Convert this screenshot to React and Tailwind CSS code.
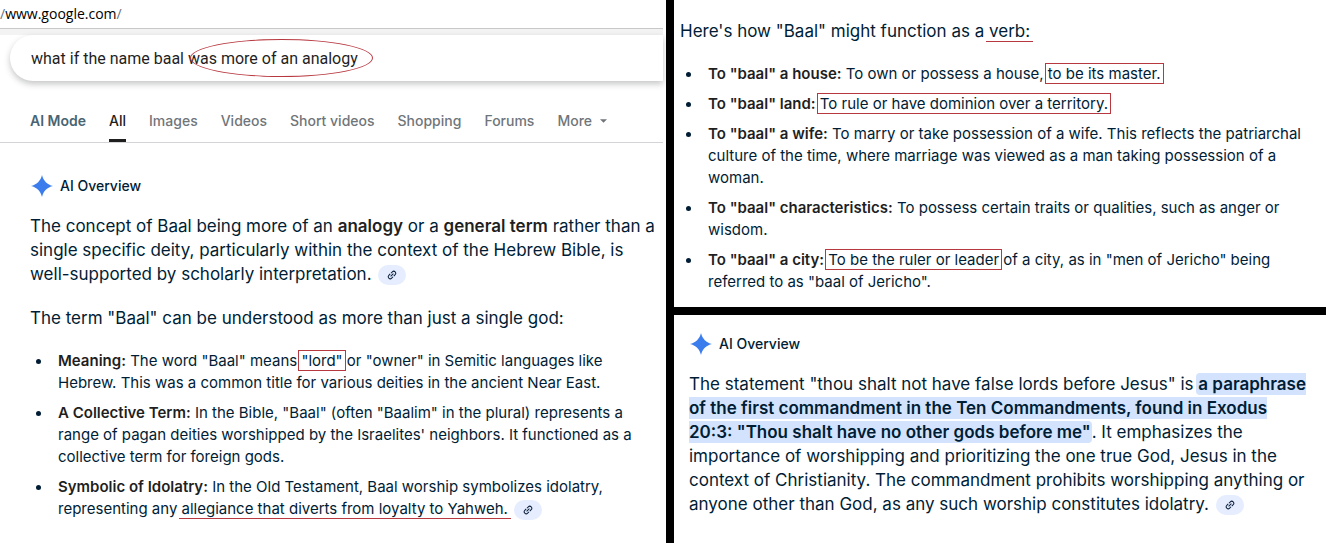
import clsx from 'clsx';

const tabs = ['AI Mode', 'All', 'Images', 'Videos', 'Short videos', 'Shopping', 'Forums'];

const Sparkle = () => (
  <svg viewBox="0 0 24 24" className="w-6 h-6 fill-[#3b7ded]" aria-hidden="true">
    <path d="M12 1C13.2 6.6 17.4 10.8 23 12C17.4 13.2 13.2 17.4 12 23C10.8 17.4 6.6 13.2 1 12C6.6 10.8 10.8 6.6 12 1Z" />
  </svg>
);

const LinkChip = () => (
  <button aria-label="View related links" className="inline-flex items-center justify-center ml-0.5 w-7 h-5 rounded-full bg-[#e5edff] align-middle">
    <svg viewBox="0 0 24 24" className="w-3 h-3 fill-[#0a1f3c] -rotate-45" aria-hidden="true">
      <path d="M11 17H7A5 5 0 0 1 7 7h4v2H7a3 3 0 0 0 0 6h4zm-3-4v-2h8v2zm5 4v-2h4a3 3 0 0 0 0-6h-4V7h4a5 5 0 0 1 0 10z" />
    </svg>
  </button>
);

const Overview = () => (
  <div className="flex items-center gap-1.5 h-6">
    <Sparkle />
    <h2 className="text-sm font-medium">AI Overview</h2>
  </div>
);

const Term = ({ children }) => <strong className="font-semibold text-[#1f1f1f]">{children}</strong>;

const Boxed = ({ children }) => (
  <span className="-mx-[3px] px-0.5 border border-[#b8383f]">{children}</span>
);

const Underlined = ({ children }) => (
  <span className="-mx-[3px] px-[3px] border-b border-[#b8383f]">{children}</span>
);

const BulletList = ({ children, className }) => (
  <ul className={clsx('flex flex-col gap-2 text-[15px] leading-[22px]', className)}>{children}</ul>
);

const Item = ({ children }) => (
  <li className="flex">
    <span className="w-[22px] shrink-0 h-[22px] flex items-center">
      <span className="w-[5px] h-[5px] rounded-full bg-[#001d35]" />
    </span>
    <p>{children}</p>
  </li>
);

const SearchPanel = () => (
  <section className="row-span-2 bg-white overflow-hidden">
    <div className="h-7 flex items-center text-sm text-black font-['Open_Sans',sans-serif]">
      <span className="text-gray-500">/</span>www.google.com<span className="text-gray-500">/</span>
    </div>
    <div className="h-[7px] mr-[3px] bg-[#f3f3f4] border-t border-[#c8c8c8]" />

    <form className="relative ml-2.5 mr-[3px] h-[46px] rounded-l-full bg-white shadow-[0_3px_6px_rgba(32,33,36,0.26)]">
      <input
        aria-label="Search"
        defaultValue="what if the name baal was more of an analogy"
        className="w-full h-full pl-[21px] rounded-l-full text-base text-[#1f1f1f] outline-none font-[Roboto,sans-serif]"
      />
      <span className="absolute left-[180px] top-1 w-[183px] h-[38px] rounded-[50%] border border-[#b8383f] pointer-events-none" />
    </form>

    <nav className="mt-[18px] h-11 mr-[3px] pl-[30px] flex gap-[23px] border-b border-[#d2d4d7] text-sm font-medium text-[#70757a]">
      {tabs.map((tab) => (
        <a
          key={tab}
          href="#"
          className={clsx(
            'h-[43px] pt-3 whitespace-nowrap',
            tab === 'AI Mode' && 'font-semibold text-[#4a6472]',
            tab === 'All' && 'text-[#1f1f1f] border-b-3 border-[#1f1f1f]'
          )}
        >
          {tab}
        </a>
      ))}
      <button className="h-[43px] pt-3 flex gap-2">
        More
        <svg viewBox="0 0 8 4" className="w-[7px] h-1 mt-2 fill-[#70757a]" aria-hidden="true">
          <path d="M0 0h8L4 4z" />
        </svg>
      </button>
    </nav>

    <div className="pl-[30px] pt-[31px] whitespace-nowrap">
      <Overview />
      <div className="mt-4 text-[17px] leading-6">
        <p>
          The concept of Baal being more of an <Term>analogy</Term> or a <Term>general term</Term> rather than a<br />
          single specific deity, particularly within the context of the Hebrew Bible, is<br />
          well-supported by scholarly interpretation. <LinkChip />
        </p>
        <p className="mt-5">The term "Baal" can be understood as more than just a single god:</p>
      </div>
      <BulletList className="mt-5 pl-[6px]">
        <Item>
          <Term>Meaning:</Term> The word "Baal" means <Boxed>"lord"</Boxed> or "owner" in Semitic languages like<br />
          Hebrew. This was a common title for various deities in the ancient Near East.
        </Item>
        <Item>
          <Term>A Collective Term:</Term> In the Bible, "Baal" (often "Baalim" in the plural) represents a<br />
          range of pagan deities worshipped by the Israelites' neighbors. It functioned as a<br />
          collective term for foreign gods.
        </Item>
        <Item>
          <Term>Symbolic of Idolatry:</Term> In the Old Testament, Baal worship symbolizes idolatry,<br />
          representing any <Underlined>allegiance that diverts from loyalty to Yahweh.</Underlined> <LinkChip />
        </Item>
      </BulletList>
    </div>
  </section>
);

const VerbPanel = () => (
  <section className="bg-white pl-1.5 pt-[19px] pb-[14px] whitespace-nowrap overflow-hidden">
    <p className="text-[17px] leading-6">
      Here's how "Baal" might function as a <Underlined>verb: </Underlined>
    </p>
    <BulletList className="mt-5 pl-[6px]">
      <Item><Term>To "baal" a house:</Term> To own or possess a house, <Boxed>to be its master.</Boxed></Item>
      <Item><Term>To "baal" land:</Term> <Boxed>To rule or have dominion over a territory.</Boxed></Item>
      <Item>
        <Term>To "baal" a wife:</Term> To marry or take possession of a wife. This reflects the patriarchal<br />
        culture of the time, where marriage was viewed as a man taking possession of a<br />
        woman.
      </Item>
      <Item>
        <Term>To "baal" characteristics:</Term> To possess certain traits or qualities, such as anger or<br />
        wisdom.
      </Item>
      <Item>
        <Term>To "baal" a city:</Term> <Boxed>To be the ruler or leader</Boxed> of a city, as in "men of Jericho" being<br />
        referred to as "baal of Jericho".
      </Item>
    </BulletList>
  </section>
);

const StatementPanel = () => (
  <section className="bg-white pl-[15px] pt-[17px] whitespace-nowrap overflow-hidden">
    <Overview />
    <p className="mt-4 text-[17px] leading-6">
      The statement "thou shalt not have false lords before Jesus" is{' '}
      <mark className="-ml-0.5 pl-0.5 pr-px py-px rounded bg-[#d3e3fd] font-semibold text-[#001d35]">
        a paraphrase<br />
        of the first commandment in the Ten Commandments, found in Exodus<br />
        20:3: "Thou shalt have no other gods before me"
      </mark>
      . It emphasizes the<br />
      importance of worshipping and prioritizing the one true God, Jesus in the<br />
      context of Christianity. The commandment prohibits worshipping anything or<br />
      anyone other than God, as any such worship constitutes idolatry. <LinkChip />
    </p>
  </section>
);

const App = () => (
  <main className="min-h-screen grid grid-cols-[666fr_652fr] grid-rows-[auto_1fr] gap-2 bg-black text-[#001d35] font-[Inter,sans-serif]">
    <SearchPanel />
    <VerbPanel />
    <StatementPanel />
  </main>
);

export default App;
